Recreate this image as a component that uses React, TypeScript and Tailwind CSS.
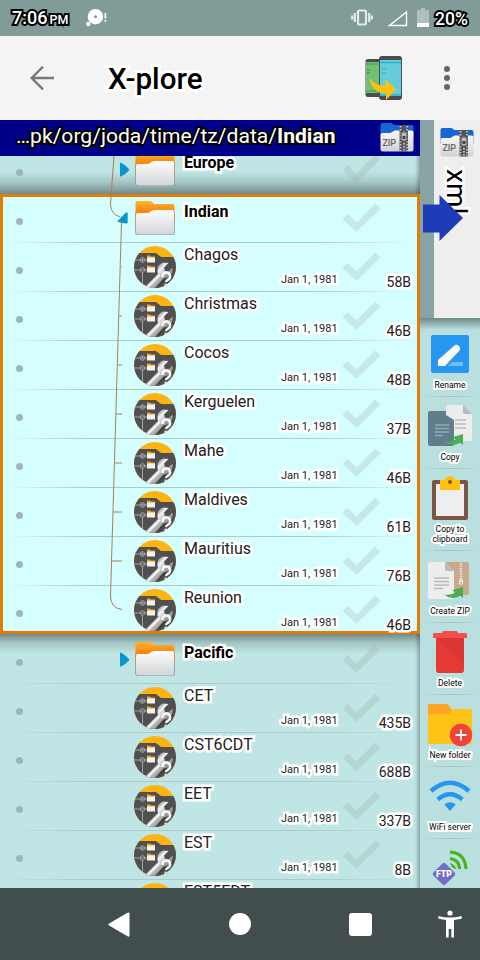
import React from "react";

const halo = "[paint-order:stroke_fill] [-webkit-text-stroke:5px_white]";

function Folder() {
  return (
    <svg width="42" height="38" viewBox="0 0 42 38" className="mt-[6px]">
      <defs>
        <linearGradient id="fb" x1="0" y1="0" x2="0" y2="1">
          <stop offset="0" stopColor="#ffb52a" />
          <stop offset="0.5" stopColor="#f98512" />
        </linearGradient>
        <linearGradient id="ff" x1="0" y1="0" x2="0" y2="1">
          <stop offset="0" stopColor="#fdfdfd" />
          <stop offset="1" stopColor="#d3d4d8" />
        </linearGradient>
      </defs>
      <rect x="1.200" y="12" width="39.600" height="24" rx="2" fill="#8a9a9a" />
      <path d="M1.500 4q0-2 2-2h12.500q1 0 2 1l2 2h18.500q2 0 2 2v16h-39z" fill="url(#fb)" />
      <path d="M2 16q0-2 2-2h9q2 0 3.500-1.500t3.500-1.500h18q2 0 2 2v20.500q0 2-2 2h-34q-2 0-2-2z" fill="url(#ff)" />
    </svg>
  );
}

function MiniFolder({ y }: { y: number }) {
  return (
    <g>
      <path d={`M13 ${y}h3l1 1h4v3h-8z`} fill="#f9a11b" />
      <rect x="13" y={y + 2} width="8" height="5" fill="#f5f2ee" />
    </g>
  );
}

function FileIcon() {
  return (
    <svg width="42" height="42" viewBox="0 0 42 42" className="mt-1">
      <defs>
        <clipPath id="disc"><circle cx="21" cy="21" r="21" /></clipPath>
        <linearGradient id="steel" gradientUnits="userSpaceOnUse" x1="19" y1="24" x2="30" y2="35">
          <stop offset="0" stopColor="#8c8c8c" />
          <stop offset="0.3" stopColor="#f4f4f4" />
          <stop offset="0.6" stopColor="#c4c4c4" />
          <stop offset="1" stopColor="#8a8a8a" />
        </linearGradient>
      </defs>
      <g clipPath="url(#disc)">
        <rect width="42" height="42" fill="#fdb411" />
        <path d="M0 7h22l5 4h15v31H0z" fill="#505052" />
        <g stroke="#b7b7b7" strokeWidth="0.8" fill="none">
          <path d="M0 14h13M0 24h13M8.500 26v15" />
          <circle cx="8.500" cy="14" r="2.300" fill="#505052" />
          <circle cx="8.500" cy="24" r="2.300" fill="#505052" />
          <path d="M7 14h3M8.500 12.500v3M7 24h3" />
        </g>
        <MiniFolder y={9.500} />
        <MiniFolder y={19.500} />
        <path d="M22 43l8-8 8-5 2-9-8 6z" fill="#2e2e30" opacity=".6" />
        <path d="M10 42L24 28Q21.500 19 29 16.500L34.500 17 30 21.500 31 25 34.500 25.500 38.500 21.500Q40 28 34 31.500L29.500 32.500 20 43z" fill="url(#steel)" />
        <path d="M14 41L26 29" stroke="#fff" strokeWidth="1.200" />
        <path d="M28.500 31q0-4.500 3.800-4.500t3.800 4q0 2-2 3.200t-1.800 2.300" fill="none" stroke="#f8f8f8" strokeWidth="2.600" />
        <circle cx="32" cy="39" r="1.600" fill="#fff" />
      </g>
    </svg>
  );
}

type RowProps = { name: string; size?: string; folder?: boolean; open?: boolean; first?: boolean; shade?: string };

function Row({ name, size, folder, open, first, shade = "" }: RowProps) {
  return (
    <div className={`relative flex h-[49px] w-[420px] shrink-0 items-start ${shade}`}>
      {!first && <i className="absolute left-[6px] top-0 h-px w-[408px] bg-[linear-gradient(to_right,transparent,#afc8c9_20%,#afc8c9_75%,transparent)]" />}
      <i className="ml-4 mt-[25px] h-[7px] w-[7px] rounded-full bg-[#9fb6b6]" />
      <div className="flex w-[111px] justify-end pt-[17px]">
        {folder && (
          <svg width="14" height="16" viewBox="0 0 14 16" className="overflow-visible">
            {open
              ? <path d="M-2.800 11.500Q-2 10.500 5.500 3q2-1.500 2.200 0v9.500q0 1-1 1Q1.200 13.500-2.800 11.500z" fill="#0797cd" />
              : <path d="M0 2.500q0-1.300 1-.8Q6 4 9 8q.5 1-.3 1.800Q6 13 1 15.500q-1 .3-1-.8z" fill="#0797cd" />}
          </svg>
        )}
      </div>
      <div className="w-[42px]">{folder ? <Folder /> : <FileIcon />}</div>
      <div className={`ml-2 w-[97px] whitespace-nowrap text-[16px] leading-5 ${folder ? "mt-[9px] font-bold text-black" : "mt-[3px] text-[#222]"} ${halo}`}>{name}</div>
      <div className={`mt-[30px] h-4 w-[55px] whitespace-nowrap text-right text-[11px] leading-4 text-[#222] ${halo}`}>{size && "Jan 1, 1981"}</div>
      <svg width="39" height="30" viewBox="0 0 39 30" className="ml-[6px] mt-[10px]">
        <path d="M0.500 16l5-5 9 8.500L33 .5l5.500 5L14.500 29z" fill="#9aa" opacity=".26" />
      </svg>
      <div className={`-ml-4 mt-[31px] w-[46px] whitespace-nowrap text-right text-[14px] leading-[18px] text-[#222] ${halo}`}>{size}</div>
    </div>
  );
}

function ZipIcon({ className = "" }: { className?: string }) {
  return (
    <svg width="34" height="30" viewBox="0 0 34 30" className={className}>
      <defs>
        <linearGradient id="zf" x1="0" y1="0" x2="0" y2="1"><stop stopColor="#fafafa" /><stop offset="1" stopColor="#cfd1d4" /></linearGradient>
      </defs>
      <path d="M0.500 2q0-2 2-2h9l3 2h17q2 0 2 2v12h-33z" fill="#1767d2" />
      <path d="M0.500 12q0-2 2-2h8l4-2.500h17q2 0 2 2v17q0 2-2 2h-29q-2 0-2-2z" fill="url(#zf)" />
      <path d="M19.500 2h8.500v26.500h-8.500z" fill="#555" />
      <path d="M20.500 3v25M27 3v25" stroke="#ccc" strokeWidth="1.600" strokeDasharray="1.500 1.500" />
      <path d="M24 8v20" stroke="#ddd" strokeWidth="1.500" strokeDasharray="1.500 1.500" />
      <rect x="21" y="9" width="6" height="9" fill="#bbb" stroke="#444" /><rect x="22.500" y="13" width="3" height="3" fill="#444" />
      <text x="2.500" y="22.500" fontSize="9" fontFamily="Roboto, sans-serif" fontWeight="500" fill="#666" textLength="13.500">ZIP</text>
    </svg>
  );
}

function Doc() {
  return (
    <g>
      <path d="M2 0h15l9 9v26q0 2-2 2H2q-2 0-2-2V2q0-2 2-2z" fill="#ededed" />
      <path d="M17 0v7q0 2 2 2h7z" fill="#bbb" />
      <path d="M6 16h15M6 19.500h15M6 23h15M6 26.500h9" stroke="#bbb" strokeWidth="1.300" />
    </g>
  );
}
const greenArrow = <path d="M16 36.500Q23 37.500 27.500 34.200L24 32.200 35 29V40L32 37.800Q24 43 16 36.500z" fill="#4dae50" />;

const icons: Record<string, React.ReactNode> = {
  rename: (
    <g>
      <rect x="3" y="0" width="38" height="38" rx="2" fill="#2796f1" />
      <path d="M20 31l4-4h11v4z" fill="#72bcf6" />
      <path d="M10 25L27 10q2-1 4 1 2 2 1 4L17 31h-7z" fill="#fafafa" />
    </g>
  ),
  copy: (
    <g>
      <rect x="0" y="6" width="26" height="35" rx="2" fill="#607d8b" />
      <g transform="translate(18)">
        <path d="M2 0h15l9 9v25q0 2-2 2H8V15L0 10V2q0-2 2-2z" fill="#ededed" /><path d="M17 0v7q0 2 2 2h7z" fill="#b9bcbc" />
        <path d="M9 15h11M9 19h11M9 23h11" stroke="#bbb" strokeWidth="1.300" />
      </g>
      <path d="M7 20h14M7 23.500h14M7 27h14M7 30.500h8" stroke="#8faab6" strokeWidth="1.300" />
      {greenArrow}
    </g>
  ),
  clip: (
    <g>
      <rect x="4" y="4" width="36" height="40" rx="2" fill="#7a5548" /><rect x="8" y="8" width="28" height="32" fill="#eee" />
      <path d="M12 4h5q1-4 5-4t5 4h5v10H12z" fill="#ffc10a" /><circle cx="22" cy="6" r="2" fill="#7a5548" />
    </g>
  ),
  zip: (
    <g>
      <rect x="7" y="0" width="34" height="33" rx="2" fill="#c8a98b" />
      <path d="M33 1v20" stroke="#e6e2dc" strokeWidth="2.500" strokeDasharray="1.500 1" /><path d="M31.500 18h3v4h-3z" fill="none" stroke="#eee" />
      <Doc /><g transform="translate(0 -4)">{greenArrow}</g>
    </g>
  ),
  trash: (
    <g>
      <path d="M8 5h28v34q0 3-3 3H11q-3 0-3-3z" fill="#e53935" /><path d="M8 7l28 27V7z" fill="#c92f34" opacity=".3" />
      <path d="M5 3q0-1 2-1h7q0-2 2-2h12q2 0 2 2h7q2 0 2 1v4H5z" fill="#f1504a" />
    </g>
  ),
  folder: (
    <g>
      <path d="M0 2q0-2 2-2h16q2 0 3 2l3 4v8H0z" fill="#ffa321" />
      <path d="M0 12q0-2 2-2h18q2 0 3-2 1-3 3-3h16q2 0 2 2v31q0 2-2 2H2q-2 0-2-2z" fill="#ffc216" />
      <circle cx="33" cy="31" r="11.200" fill="#f04438" /><path d="M27.500 31h11M33 25.500v11" stroke="#fff" strokeWidth="1.800" />
    </g>
  ),
  wifi: (
    <g fill="none" stroke="#2796f1">
      <path d="M3 10q19-16.500 38 0" strokeWidth="4.500" /><path d="M9.800 18.500q12.200-10.500 24.400 0" strokeWidth="4.500" />
      <path d="M16.300 23.500q5.700-4.500 11.400 0L22 30z" fill="#2796f1" stroke="none" />
    </g>
  ),
  ftp: (
    <g>
      <rect x="7.500" y="15.500" width="17" height="17" rx="2" transform="rotate(45 16 24)" fill="#736bc9" />
      <path d="M22 2q15 1 16 17M22 8.500q9 1 9.700 10.500" fill="none" stroke="#46b51d" strokeWidth="3.200" /><path d="M22 13q5 1 6 6-4 0-6-6" fill="#46b51d" />
      <text x="8" y="27.200" fontSize="9" fontWeight="900" fontFamily="Roboto, sans-serif" fill="#fff" textLength="16" lengthAdjust="spacingAndGlyphs">FTP</text>
    </g>
  ),
};

function Tool({ icon, label, box, iconBox, labelBox = "" }: { icon: string; label: string; box: string; iconBox: string; labelBox?: string }) {
  return (
    <div className={`relative flex shrink-0 flex-col items-center ${box}`}>
      <i className="absolute bottom-0 left-0 h-px w-full bg-[linear-gradient(to_right,transparent,#a3bebe,transparent)]" />
      <svg width="44" height="44" viewBox="0 0 44 44" className={`shrink-0 overflow-visible ${iconBox}`}>{icons[icon]}</svg>
      <div className={`w-full whitespace-pre-line text-center text-[8.5px] leading-[10px] text-black [-webkit-text-stroke:4px_white] [paint-order:stroke_fill] ${labelBox}`}>{label}</div>
    </div>
  );
}

const selected = [["Chagos", "58B"], ["Christmas", "46B"], ["Cocos", "48B"], ["Kerguelen", "37B"], ["Mahe", "46B"], ["Maldives", "61B"], ["Mauritius", "76B"], ["Reunion", "46B"]];
const others = [["CET", "435B"], ["CST6CDT", "688B"], ["EET", "337B"], ["EST", "8B"], ["EST5EDT", ""]];

export default function App() {
  return (
    <div className="flex h-[960px] w-[480px] flex-col overflow-hidden bg-[#f4f4f4] font-['Roboto',sans-serif]">
      <header className="flex h-9 shrink-0 items-center bg-[#819b99] text-white">
        <div className="ml-3 mt-px flex w-[73px] items-baseline font-medium leading-5 [-webkit-text-stroke:4px_black] [paint-order:stroke_fill]">
          <span className="text-[18px]">7:06</span><span className="ml-[2px] text-[12.5px]">PM</span>
        </div>
        <svg width="24" height="20" viewBox="0 0 24 20" fill="#fff">
          <path d="M10.500 1a7.700 7.700 0 1 1-.1 0zM10.500 7.200a1.500 1.500 0 1 0 .1 0z" fillRule="evenodd" /><circle cx="3.300" cy="16" r="2.200" /><rect x="19.500" y="5" width="1.700" height="5.500" /><rect x="19.500" y="12" width="1.700" height="1.700" />
        </svg>
        <svg width="22" height="18" viewBox="0 0 22 18" className="ml-[242px]" fill="none" stroke="#e3eaea">
          <rect x="7" y="1.500" width="8" height="14" rx="1" strokeWidth="2.200" /><path d="M3.800 4v9M18.200 4v9M1.200 6.500v4M20.800 6.500v4" strokeWidth="2.200" />
        </svg>
        <svg width="21" height="17" viewBox="0 0 21 17" className="ml-[14px]"><path d="M2.500 15.500h17V2z" fill="none" stroke="#fff" strokeWidth="1.400" /></svg>
        <svg width="12" height="19" viewBox="0 0 12 19" className="-mt-px ml-[9px]"><path d="M4 0h4v2h4v17H0V2h4z" fill="#afbfbe" /><path d="M0 15h12v4H0z" fill="#fff" /></svg>
        <span className="ml-[6px] mt-px text-[17.5px] font-medium leading-5 [-webkit-text-stroke:4px_black] [paint-order:stroke_fill]">20%</span>
      </header>

      <div className="flex h-[84px] shrink-0 items-center">
        <svg width="24" height="24" viewBox="0 0 24 24" className="ml-[30px]" fill="none" stroke="#777" strokeWidth="2.400"><path d="M24 12H2M13 .7L1.700 12 13 23.300" /></svg>
        <h1 className="ml-[54px] mt-[2px] w-[257px] text-[29.6px] font-medium leading-9 text-black [-webkit-text-stroke:6px_white] [paint-order:stroke_fill]">X-plore</h1>
        <svg width="37" height="44" viewBox="0 0 37 44">
          <rect x="0.500" y="3" width="16" height="38" rx="2.500" fill="#4b4b50" /><rect x="1" y="6" width="15" height="31" fill="#72c077" /><path d="M1 8h14M1 35h14" stroke="#4caf50" strokeWidth="1.500" />
          <path d="M2 14h3M2 17h3" stroke="#568b5b" strokeWidth="2" strokeDasharray="1.500 1" />
          <rect x="14" y="0" width="23" height="44" rx="3" fill="#4b4b50" /><rect x="15" y="4" width="21" height="36" fill="#67ccd9" /><path d="M15 6.500h21M15 39h21" stroke="#25b5ce" strokeWidth="1.500" /><path d="M17 13h4M17 17h4" stroke="#55b0b9" strokeWidth="2" strokeDasharray="1.500 1" />
          <path d="M4.500 22q6 8 16 7.500v-6L31 33.500 21 44v-6.500Q7 37 4.500 22z" fill="#ffc10e" />
        </svg>
        <svg width="6" height="26" viewBox="0 0 6 26" className="ml-[42px]" fill="#666"><circle cx="3" cy="4" r="3" /><circle cx="3" cy="13" r="3" /><circle cx="3" cy="22" r="3" /></svg>
      </div>

      <main className="flex h-[768px] shrink-0 overflow-hidden">
        <section className="relative flex w-[420px] shrink-0 flex-col overflow-hidden bg-[#bfe5e4]">
          <div className="z-10 flex h-9 shrink-0 items-center bg-[#00008b]">
            <div className="-mt-1 ml-4 w-[365px] whitespace-nowrap text-[21.1px] leading-8 text-white [-webkit-text-stroke:4px_black] [paint-order:stroke_fill]">…pk/org/joda/time/tz/data/<b>Indian</b></div>
            <ZipIcon className="-ml-px" />
          </div>
          <div className="-mt-3 flex h-[50px] shrink-0 items-start bg-[linear-gradient(to_bottom,#0000_28px,#0002_38px,#00000066_50px)]">
            <Row name="Europe" folder first />
          </div>
          <div className="h-[440px] shrink-0 bg-[#d5fffe] shadow-[inset_0_0_0_3px_#e07c08]">
            <div className="-mt-px flex flex-col">
              <Row name="Indian" folder open first />
              {selected.map(([n, s]) => <Row key={n} name={n} size={s} />)}
            </div>
          </div>
          <Row name="Pacific" folder first shade="bg-[linear-gradient(to_bottom,#00000066,#0002_9px,#0000_20px)]" />
          {others.map(([n, s]) => <Row key={n} name={n} size={s} />)}
          <svg width="130" height="500" viewBox="0 120 130 500" className="pointer-events-none absolute left-0 top-0 z-[1]" fill="none" stroke="#a98052" strokeWidth="1">
            <path d="M114 156L110.500 204Q110.500 214 120 217M121.500 222L110.500 596Q110.500 608 122 609.500" />
            <path d="M120 267h2M118.700 316h3.300M117.300 365h4.700M115.800 414h6.200M114.400 463h7.600M113 512h9M111.600 561h10.400" strokeWidth="1.500" stroke="#b7a98d" />
          </svg>
          <i className="absolute right-0 top-9 h-[38px] w-[5px] bg-gradient-to-r from-transparent to-[#0004]" />
          <i className="absolute bottom-0 right-0 h-[254px] w-[5px] bg-gradient-to-r from-transparent to-[#0004]" />
        </section>

        <aside className="relative flex w-[60px] flex-col bg-[#b9e0df]">
          <div className="flex h-[198px] shrink-0 bg-[#88a3a4] pl-[14px]">
            <div className="flex w-[46px] flex-col bg-[#eee] pl-[6px] pt-2">
              <ZipIcon />
              <span className="ml-[2px] mt-[11px] h-[50px] self-start text-[28px] leading-[28px] text-black [-webkit-text-stroke:5px_white] [paint-order:stroke_fill] [writing-mode:vertical-rl]">xml</span>
            </div>
          </div>
          <svg width="42" height="46" viewBox="0 0 42 46" className="absolute left-[3px] top-[75px]"><path d="M0 9.500h16.500V0L40 23 16.500 46v-8.500H0z" fill="#1e3cb8" /></svg>
          <div className="h-3 shrink-0 bg-gradient-to-b from-[#0006] to-transparent" />
          <Tool icon="rename" label="Rename" box="h-[67px]" iconBox="mt-[5px]" labelBox="mt-px" />
          <Tool icon="copy" label="Copy" box="h-[72px]" iconBox="mt-[8px]" labelBox="mt-[3px]" />
          <Tool icon="clip" label={"Copy to\nclipboard"} box="h-[82px]" iconBox="mt-[7px]" labelBox="mt-[4px]" />
          <Tool icon="zip" label="Create ZIP" box="h-[72px]" iconBox="mt-[11px]" />
          <Tool icon="trash" label="Delete" box="h-[72px]" iconBox="mt-[8px]" labelBox="mt-[3px]" />
          <Tool icon="folder" label="New folder" box="h-[72px]" iconBox="mt-[9px]" labelBox="mt-[2px]" />
          <Tool icon="wifi" label="WiFi server" box="h-[72px]" iconBox="mt-[14px]" labelBox="-mt-[3px]" />
          <Tool icon="ftp" label="" box="h-[72px]" iconBox="mt-[11px]" />
        </aside>
      </main>

      <nav className="flex h-[72px] shrink-0 items-center bg-[#414e4d]">
        <svg width="22" height="25" viewBox="0 0 22 25" className="ml-[108px]"><path d="M0 12.500Q0 12 20 0.500q1.500-.5 1.500 1v22q0 1.500-1.500 1Q0 13 0 12.500z" fill="#fff" /></svg>
        <i className="ml-[99px] h-[22px] w-[22px] rounded-full bg-white" />
        <i className="ml-[98px] h-[23px] w-[23px] rounded-[3px] bg-white" />
        <svg width="24" height="28" viewBox="0 0 24 28" className="ml-[66px]" fill="#fff"><circle cx="12" cy="3" r="2.600" /><path d="M.3 6Q12 9 23.700 6v2.800L16 10v17.500h-2.700V19h-2.600v8.500H8V10L.3 8.800z" /></svg>
      </nav>
    </div>
  );
}
